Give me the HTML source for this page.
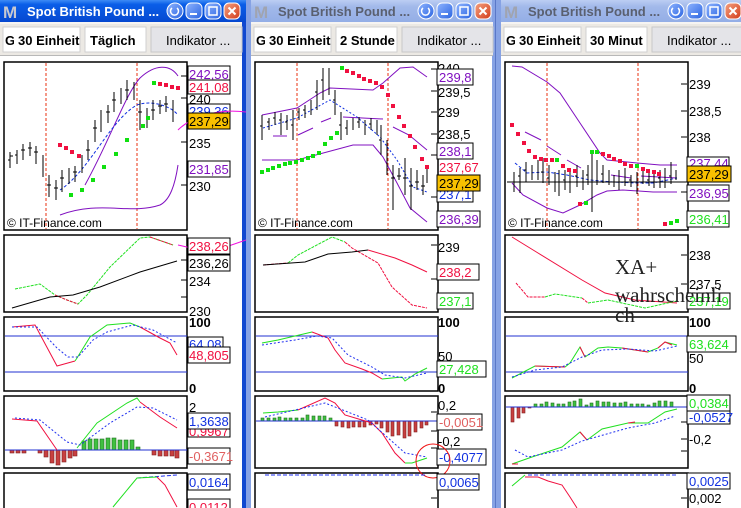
<!DOCTYPE html>
<html><head><meta charset="utf-8"><style>
html,body{margin:0;padding:0;width:741px;height:508px;overflow:hidden;background:#fff}
svg{display:block}
text{font-family:"Liberation Sans",sans-serif}
.t{font-size:13px;fill:#000}
.ttl{font-size:13px;font-weight:bold}
</style></head><body>
<svg width="741" height="508" viewBox="0 0 741 508" xmlns="http://www.w3.org/2000/svg">
<defs>
<linearGradient id="act" x1="0" y1="0" x2="0" y2="1"><stop offset="0" stop-color="#3d8bf5"/><stop offset="0.2" stop-color="#0a5ee8"/><stop offset="1" stop-color="#0648d0"/></linearGradient>
<linearGradient id="ina" x1="0" y1="0" x2="0" y2="1"><stop offset="0" stop-color="#bccdf3"/><stop offset="0.3" stop-color="#a2b9ea"/><stop offset="1" stop-color="#94aee6"/></linearGradient>
<linearGradient id="bb" x1="0" y1="0" x2="1" y2="1"><stop offset="0" stop-color="#8fb4ff"/><stop offset="1" stop-color="#2a64e0"/></linearGradient>
<linearGradient id="rb" x1="0" y1="0" x2="1" y2="1"><stop offset="0" stop-color="#f4a080"/><stop offset="1" stop-color="#d23c1a"/></linearGradient>
<g id="btns">
 <rect x="167" y="3" width="16" height="16" rx="8" fill="url(#bb)" stroke="#fff"/>
 <path d="M172,8 a4,4 0 1 0 5,0" fill="none" stroke="#fff" stroke-width="1.5"/>
 <rect x="186" y="3" width="16" height="16" rx="5" fill="url(#bb)" stroke="#fff"/>
 <rect x="190" y="13" width="7" height="2" fill="#fff"/>
 <rect x="205" y="3" width="16" height="16" rx="5" fill="url(#bb)" stroke="#fff"/>
 <rect x="209" y="7" width="8" height="8" fill="none" stroke="#fff" stroke-width="1.5"/>
 <rect x="224" y="3" width="16" height="16" rx="5" fill="url(#rb)" stroke="#fff"/>
 <path d="M228.5,7.5 l7,7 M235.5,7.5 l-7,7" stroke="#fff" stroke-width="2"/>
</g>
<g id="chrome">
 <rect x="0" y="22" width="242" height="34" fill="#ece9e4"/>
 <line x1="0" y1="23" x2="242" y2="23" stroke="#fff"/>
 <line x1="0" y1="55.5" x2="242" y2="55.5" stroke="#b8b8b8"/>
 <rect x="3" y="27" width="77" height="25" fill="#fff" stroke="#d0d0d0"/>
 <rect x="85" y="27" width="61" height="25" fill="#fff" stroke="#d0d0d0"/>
 <rect x="151" y="27" width="91" height="25" fill="#e4e4e8" stroke="#c8c8c8"/>
 <text x="5" y="45" class="t" style="font-weight:bold">G</text>
 <rect x="14" y="28" width="3" height="23" fill="#fff"/>
 <text x="18" y="45" class="t" style="font-weight:bold">30 Einheit</text>
 <text x="166" y="45" class="t">Indikator ...</text>
 <rect x="4" y="62" width="183" height="168" fill="none" stroke="#000" stroke-width="1.5"/>
 <rect x="4" y="235" width="183" height="77" fill="none" stroke="#000" stroke-width="1.5"/>
 <rect x="4" y="317" width="183" height="74" fill="none" stroke="#000" stroke-width="1.5"/>
 <rect x="4" y="396" width="183" height="72" fill="none" stroke="#000" stroke-width="1.5"/>
 <rect x="4" y="473" width="183" height="40" fill="none" stroke="#000" stroke-width="1.5"/>
 <path d="M46,63V229 M137,63V229" stroke="#e83010" stroke-dasharray="3,2"/>
 <text x="7" y="227" class="t" style="font-size:12px">© IT-Finance.com</text>
</g>
</defs>

<!-- window backgrounds / borders -->
<rect x="242" y="0" width="4" height="508" fill="#1048d0"/>
<rect x="246" y="0" width="5" height="508" fill="#86a2e4"/>
<rect x="492" y="0" width="9" height="508" fill="#86a2e4"/>
<rect x="495" y="0" width="1" height="508" fill="#5a78c8"/>

<!-- ===== Window 1 ===== -->
<g>
<rect x="0" y="0" width="246" height="22" fill="url(#act)"/>
<text x="3" y="18" style="font-size:17px;font-weight:bold;fill:#c8c8d0">M</text>
<text x="27" y="16" class="ttl" fill="#fff">Spot British Pound ...</text>
<use href="#btns"/>
<use href="#chrome"/>
<text x="90" y="45" class="t" style="font-weight:bold">Täglich</text>
<!-- main chart -->
<path d="M85,185 C110,140 125,95 140,78 C155,64 170,64 178,76" fill="none" stroke="#8010c0"/>
<path d="M60,215 C100,200 130,215 160,205 C170,200 175,185 178,165" fill="none" stroke="#8010c0"/>
<path d="M60,190 C90,170 110,120 137,105 C150,100 170,105 178,115" fill="none" stroke="#1030e0" stroke-dasharray="3,2"/>
<path d="M10,152v16M17,150v14M23,144v16M30,142v14M36,146v18M43,155v22M49,175v22M56,180v20M62,170v22M69,168v16M75,166v16M82,155v18M88,140v20M95,120v22M101,110v22M108,105v18M114,92v20M121,88v16M127,80v20M134,82v18M140,100v30M147,108v20M153,100v20M160,100v14M166,96v16M173,100v22" stroke="#000" fill="none"/>
<path d="M8,160h2M10,156h3M15,155h2M21,150h4M28,148h4M34,152h4M47,185h4M54,188h4M60,178h4M73,172h4M86,150h4M93,128h4M106,112h4M112,100h4M125,90h4M138,112h4M151,110h4M158,106h4M164,104h4" stroke="#000"/>
<g fill="#10e010"><rect x="69" y="193" width="4" height="4"/><rect x="80" y="188" width="4" height="4"/><rect x="91" y="178" width="4" height="4"/><rect x="102" y="165" width="4" height="4"/><rect x="114" y="152" width="4" height="4"/><rect x="125" y="138" width="4" height="4"/><rect x="141" y="124" width="4" height="4"/><rect x="146" y="116" width="4" height="4"/><rect x="152" y="81" width="4" height="4"/></g>
<g fill="#f01040"><rect x="58" y="143" width="4" height="4"/><rect x="64" y="146" width="4" height="4"/><rect x="70" y="150" width="4" height="4"/><rect x="77" y="154" width="4" height="4"/><rect x="158" y="82" width="4" height="4"/><rect x="164" y="83" width="4" height="4"/><rect x="170" y="85" width="4" height="4"/><rect x="176" y="86" width="4" height="4"/></g>
<rect x="188" y="66" width="42" height="16" fill="#fff" stroke="#000"/><text x="189" y="79" class="t" fill="#8010c0" style="fill:#8010c0">242,56</text>
<rect x="188" y="80" width="42" height="14" fill="#fff" stroke="#000"/><text x="189" y="92" class="t" style="fill:#f01040">241,08</text>
<text x="189" y="104" class="t">240</text>
<rect x="188" y="104" width="42" height="12" fill="#fff" stroke="#000"/><text x="189" y="116" class="t" style="fill:#1030e0">239,36</text>
<path d="M178,130 C190,118 215,108 246,112" fill="none" stroke="#f010e0"/>
<rect x="188" y="113" width="42" height="16" fill="#f8c000" stroke="#000"/><text x="189" y="126" class="t">237,29</text>
<text x="189" y="148" class="t">235</text>
<rect x="188" y="161" width="42" height="16" fill="#fff" stroke="#000"/><text x="189" y="174" class="t" style="fill:#8010c0">231,85</text>
<text x="189" y="191" class="t">230</text>
<path d="M181,76h6M181,98h6M181,142h6M181,185h6" stroke="#000"/>
<!-- panel 2 -->
<path d="M15,289 40,284 55,295 67,300 78,304 87,295 110,267 140,238 150,237 173,245" fill="none" stroke="#20e020" stroke-dasharray="3,1"/>
<path d="M55,295 67,300 78,304 M150,237 173,245" fill="none" stroke="#f01040" stroke-dasharray="3,1"/>
<path d="M12,308 50,297 73,295 100,287 140,272 177,261" fill="none" stroke="#000"/>
<path d="M178,245 200,250 217,250 246,240" fill="none" stroke="#f010e0"/>
<rect x="188" y="238" width="42" height="16" fill="#fff" stroke="#000"/><text x="189" y="251" class="t" style="fill:#f01040">238,26</text>
<rect x="188" y="255" width="42" height="16" fill="#fff" stroke="#000"/><text x="189" y="268" class="t">236,26</text>
<text x="189" y="286" class="t">234</text>
<text x="189" y="316" class="t">230</text>
<path d="M181,260h6M181,280h6M181,297h6" stroke="#000"/>
<!-- panel 3 -->
<path d="M5,336H187M5,372H187" stroke="#2030d0"/>
<path d="M12,327 35,325 57,366 75,361 M140,327 160,338 170,343 177,355" fill="none" stroke="#f01040"/>
<path d="M75,361 77,358 90,337 107,325 130,323 140,327" fill="none" stroke="#20e020"/>
<path d="M12,327 37,327 57,348 68,357 78,357 93,340 107,332 133,325 153,330 177,343" fill="none" stroke="#2030f0" stroke-dasharray="2,2"/>
<text x="189" y="327" class="t" style="font-weight:bold">100</text>
<rect x="188" y="337" width="35" height="13" fill="#fff" stroke="#000"/><text x="189" y="349" class="t" style="fill:#1030e0">64,08</text>
<rect x="188" y="347" width="42" height="16" fill="#fff" stroke="#000"/><text x="189" y="360" class="t" style="fill:#f01040">48,805</text>
<text x="189" y="393" class="t" style="font-weight:bold">0</text>
<!-- panel 4 -->
<g fill="#40c040" stroke="#207020" stroke-width="0.6"><rect x="82" y="441" width="4" height="9"/><rect x="88" y="439" width="4" height="11"/><rect x="94" y="439" width="4" height="11"/><rect x="100" y="439" width="4" height="11"/><rect x="106" y="438" width="4" height="12"/><rect x="112" y="438" width="4" height="12"/><rect x="118" y="440" width="4" height="10"/><rect x="124" y="440" width="4" height="10"/><rect x="130" y="440" width="4" height="10"/><rect x="136" y="447" width="4" height="3"/></g>
<g fill="#c84040" stroke="#802020" stroke-width="0.6"><rect x="10" y="450" width="4" height="3"/><rect x="16" y="450" width="4" height="3"/><rect x="22" y="450" width="4" height="3"/><rect x="38" y="450" width="4" height="3"/><rect x="44" y="450" width="4" height="7"/><rect x="50" y="450" width="4" height="13"/><rect x="56" y="450" width="4" height="15"/><rect x="62" y="450" width="4" height="12"/><rect x="68" y="450" width="4" height="8"/><rect x="73" y="450" width="4" height="6"/><rect x="152" y="450" width="4" height="5"/><rect x="158" y="450" width="4" height="6"/><rect x="164" y="450" width="4" height="6"/><rect x="170" y="450" width="4" height="6"/><rect x="175" y="450" width="4" height="8"/></g>
<path d="M5,450H187" stroke="#2030d0"/>
<path d="M12,419 37,421 57,450 M140,402 160,417 177,428" fill="none" stroke="#f01040"/>
<path d="M77,448 97,423 127,403 137,398 140,402" fill="none" stroke="#20e020"/>
<path d="M15,418 40,420 67,442 80,445 110,423 137,407 153,408 177,420" fill="none" stroke="#2030f0" stroke-dasharray="2,2"/>
<text x="189" y="412" class="t">2</text>
<rect x="188" y="427" width="42" height="10" fill="#fff" stroke="#000"/><text x="189" y="436" class="t" style="fill:#f01040">0,9967</text>
<rect x="188" y="413" width="42" height="16" fill="#fff" stroke="#000"/><text x="189" y="426" class="t" style="fill:#1030e0">1,3638</text>
<rect x="188" y="448" width="42" height="16" fill="#fff" stroke="#000"/><text x="189" y="461" class="t" style="fill:#e06060">-0,3671</text>
<!-- panel 5 -->
<path d="M137,478 177,475" stroke="#2030f0" stroke-dasharray="4,2"/>
<path d="M113,507 137,478 157,477" fill="none" stroke="#20e020"/>
<path d="M157,477 165,485 177,507" fill="none" stroke="#f01040"/>
<rect x="188" y="474" width="42" height="16" fill="#fff" stroke="#000"/><text x="189" y="487" class="t" style="fill:#1030e0">0,0164</text>
<rect x="188" y="499" width="42" height="16" fill="#fff" stroke="#000"/><text x="189" y="512" class="t" style="fill:#f01040">0,0112</text>
</g>

<!-- ===== Window 2 ===== -->
<g transform="translate(251,0)">
<rect x="0" y="0" width="241" height="22" fill="url(#ina)"/>
<text x="3" y="18" style="font-size:17px;font-weight:bold;fill:#a0a4b0">M</text>
<text x="27" y="16" class="ttl" fill="#5a6070">Spot British Pound ...</text>
<use href="#btns"/>
<use href="#chrome"/>
<text x="89" y="45" class="t" style="font-weight:bold">2 Stunde</text>
<path d="M11,115 46,108 69,93 79,88 122,90 132,83 149,68 162,67 176,77" fill="none" stroke="#8010c0"/>
<path d="M11,160 46,160 76,152 102,145 122,145 132,157 146,183 159,208 176,222" fill="none" stroke="#8010c0"/>
<path d="M22,136H36M47,135 62,128M70,122 80,118M92,117 132,119M142,127 158,135 176,150" fill="none" stroke="#8010c0"/>
<path d="M12,128 46,118 79,100 106,117 129,137 146,160 162,187 176,192" fill="none" stroke="#1030e0" stroke-dasharray="2,2"/>
<path d="M11,115v25M18,118v12M24,112v13M30,113v22M36,115v15M42,110v30M48,108v12M54,105v13M60,100v15M66,80v30M72,68v32M78,68v27M84,90v25M90,112v28M96,120v15M102,118v12M108,117v11M114,120v15M120,118v12M126,120v15M130,125v30M136,140v35M142,165v45M148,168v12M154,158v37M160,168v42M166,170v20M172,175v20M176,168v15" stroke="#000" fill="none"/>
<path d="M9,126h2M16,122h2M22,118h2M28,120h2M34,122h2M40,125h2M46,112h2M52,110h2M64,92h2M70,80h2M82,100h2M88,125h2M94,128h2M106,122h2M118,124h2M128,140h2M140,178h4M146,176h4M152,178h4M158,186h4M164,182h4M170,186h4" stroke="#000"/>
<g fill="#10e010"><rect x="9" y="170" width="4" height="4"/><rect x="15" y="168" width="4" height="4"/><rect x="20" y="166" width="4" height="4"/><rect x="26" y="164" width="4" height="4"/><rect x="32" y="162" width="4" height="4"/><rect x="37" y="161" width="4" height="4"/><rect x="43" y="160" width="4" height="4"/><rect x="49" y="158" width="4" height="4"/><rect x="55" y="156" width="4" height="4"/><rect x="60" y="154" width="4" height="4"/><rect x="66" y="151" width="4" height="4"/><rect x="72" y="142" width="4" height="4"/><rect x="78" y="136" width="4" height="4"/><rect x="84" y="131" width="4" height="4"/><rect x="89" y="66" width="4" height="4"/></g>
<g fill="#f01040"><rect x="94" y="69" width="4" height="4"/><rect x="100" y="71" width="4" height="4"/><rect x="106" y="74" width="4" height="4"/><rect x="111" y="77" width="4" height="4"/><rect x="117" y="79" width="4" height="4"/><rect x="123" y="81" width="4" height="4"/><rect x="129" y="85" width="4" height="4"/><rect x="135" y="93" width="4" height="4"/><rect x="140" y="104" width="4" height="4"/><rect x="146" y="115" width="4" height="4"/><rect x="151" y="124" width="4" height="4"/><rect x="157" y="134" width="4" height="4"/><rect x="162" y="145" width="4" height="4"/><rect x="169" y="157" width="4" height="4"/><rect x="174" y="165" width="4" height="4"/></g>
<text x="187" y="73" class="t">240</text>
<rect x="186" y="69" width="36" height="16" fill="#fff" stroke="#000"/><text x="188" y="82" class="t" style="fill:#8010c0">239,8</text>
<text x="187" y="97" class="t">239,5</text>
<text x="187" y="117" class="t">239</text>
<text x="187" y="139" class="t">238,5</text>
<rect x="186" y="143" width="36" height="16" fill="#fff" stroke="#000"/><text x="188" y="156" class="t" style="fill:#8010c0">238,1</text>
<text x="188" y="172" class="t" style="fill:#f01040">237,67</text>
<rect x="186" y="188" width="36" height="14" fill="#fff" stroke="#000"/><text x="188" y="199" class="t" style="fill:#1030e0">237,1</text>
<rect x="186" y="175" width="43" height="16" fill="#f8c000" stroke="#000"/><text x="188" y="188" class="t">237,29</text>
<rect x="186" y="211" width="43" height="16" fill="#fff" stroke="#000"/><text x="188" y="224" class="t" style="fill:#8010c0">236,39</text>
<path d="M180,69h6M180,91h6M180,112h6M180,134h6M180,155h6M180,197h6" stroke="#000"/>
<!-- panel 2 -->
<path d="M12,265 37,263 M94,242 101,248 127,263 141,287 161,305 176,308" fill="none" stroke="#f01040" stroke-dasharray="3,1"/>
<path d="M37,263 47,255 81,237 94,242" fill="none" stroke="#20e020" stroke-dasharray="3,1"/>
<path d="M12,265 54,262 77,254 101,252 117,250" fill="none" stroke="#000"/>
<path d="M117,250 144,258 161,265 176,272" fill="none" stroke="#f01040"/>
<text x="187" y="252" class="t">239</text>
<rect x="186" y="264" width="42" height="16" fill="#fff" stroke="#000"/><text x="188" y="277" class="t" style="fill:#f01040">238,2</text>
<rect x="186" y="293" width="36" height="16" fill="#fff" stroke="#000"/><text x="188" y="306" class="t" style="fill:#20e020">237,1</text>
<path d="M180,245h6M180,279h6" stroke="#000"/>
<!-- panel 3 -->
<path d="M5,336H187M5,372H187" stroke="#2030d0"/>
<path d="M11,343 27,340 61,332" fill="none" stroke="#20e020"/>
<path d="M61,332 77,338 84,350 94,363 111,369 121,373 131,379" fill="none" stroke="#f01040"/>
<path d="M131,379 141,378 151,377 154,381 164,374 176,368" fill="none" stroke="#20e020"/>
<path d="M11,345 44,340 66,336 81,338 97,355 121,367 134,375 154,378 176,373" fill="none" stroke="#2030f0" stroke-dasharray="2,2"/>
<text x="187" y="327" class="t" style="font-weight:bold">100</text>
<text x="187" y="361" class="t">50</text>
<rect x="186" y="361" width="49" height="16" fill="#fff" stroke="#000"/><text x="188" y="374" class="t" style="fill:#20e020">27,428</text>
<text x="187" y="393" class="t" style="font-weight:bold">0</text>
<!-- panel 4 -->
<g fill="#40c040" stroke="#207020" stroke-width="0.6"><rect x="10" y="418" width="3" height="3"/><rect x="16" y="418" width="3" height="3"/><rect x="22" y="418" width="3" height="3"/><rect x="27" y="417" width="3" height="4"/><rect x="33" y="418" width="3" height="3"/><rect x="38" y="418" width="3" height="3"/><rect x="44" y="418" width="3" height="3"/><rect x="50" y="418" width="3" height="3"/><rect x="55" y="415" width="3" height="6"/><rect x="61" y="416" width="3" height="5"/><rect x="67" y="416" width="3" height="5"/><rect x="72" y="416" width="3" height="5"/><rect x="78" y="418" width="3" height="3"/></g>
<g fill="#c84040" stroke="#802020" stroke-width="0.6"><rect x="84" y="421" width="3" height="5"/><rect x="90" y="421" width="3" height="6"/><rect x="96" y="421" width="3" height="7"/><rect x="101" y="421" width="3" height="6"/><rect x="107" y="421" width="3" height="6"/><rect x="112" y="421" width="3" height="6"/><rect x="118" y="421" width="3" height="4"/><rect x="124" y="421" width="3" height="3"/><rect x="129" y="421" width="3" height="7"/><rect x="135" y="421" width="3" height="11"/><rect x="140" y="421" width="3" height="15"/><rect x="146" y="421" width="3" height="14"/><rect x="152" y="421" width="3" height="17"/><rect x="157" y="421" width="3" height="15"/><rect x="163" y="421" width="3" height="11"/><rect x="169" y="421" width="3" height="7"/><rect x="174" y="421" width="3" height="4"/></g>
<path d="M5,421H187" stroke="#2030d0"/>
<path d="M12,413 27,412 47,410" fill="none" stroke="#20e020"/>
<path d="M47,410 74,398 84,403 94,415 121,423 131,433 144,453 154,463" fill="none" stroke="#f01040"/>
<path d="M154,463 161,463 176,458" fill="none" stroke="#20e020"/>
<path d="M14,417 74,403 117,420 154,453 176,457" fill="none" stroke="#2030f0" stroke-dasharray="2,2"/>
<text x="187" y="410" class="t">0,2</text>
<rect x="186" y="414" width="45" height="16" fill="#fff" stroke="#000"/><text x="188" y="427" class="t" style="fill:#e06060">-0,0051</text>
<text x="187" y="446" class="t">-0,2</text>
<rect x="186" y="449" width="49" height="16" fill="#fff" stroke="#000"/><text x="188" y="462" class="t" style="fill:#1030e0">-0,4077</text>
<circle cx="182" cy="461" r="17" fill="none" stroke="#f01010"/>
<path d="M180,412h6M180,431h6M180,448h6" stroke="#000"/>
<!-- panel 5 -->
<path d="M14,475H176" stroke="#2030f0" stroke-dasharray="4,2"/>
<rect x="186" y="474" width="42" height="16" fill="#fff" stroke="#000"/><text x="188" y="487" class="t" style="fill:#1030e0">0,0065</text>
<path d="M180,498h6" stroke="#000"/>
</g>

<!-- ===== Window 3 ===== -->
<g transform="translate(501,0)">
<rect x="0" y="0" width="241" height="22" fill="url(#ina)"/>
<text x="3" y="18" style="font-size:17px;font-weight:bold;fill:#a0a4b0">M</text>
<text x="27" y="16" class="ttl" fill="#5a6070">Spot British Pound ...</text>
<use href="#btns"/>
<use href="#chrome"/>
<text x="89" y="45" class="t" style="font-weight:bold">30 Minut</text>
<path d="M11,66 21,67 46,82 59,93 79,123 99,153 106,160 136,163 159,165 176,165" fill="none" stroke="#8010c0"/>
<path d="M11,183 22,195 46,208 62,213 79,205 96,195 106,191 122,190 152,192 176,192" fill="none" stroke="#8010c0"/>
<path d="M24,132 40,140M46,146 60,155M66,160 80,168M110,175 130,178M140,176 176,178" fill="none" stroke="#8010c0"/>
<path d="M14,163 26,173 46,172 66,175 89,180 112,182 136,183 152,183 176,178" fill="none" stroke="#1030e0" stroke-dasharray="3,2"/>
<path d="M6,182H187" stroke="#000"/>
<path d="M13,172v20M19,168v25M25,162v20M31,165v15M37,160v20M42,158v25M48,165v20M54,172v20M58,170v26M64,170v20M69,168v25M76,165v22M82,170v20M87,165v20M91,150v62M96,160v25M102,165v18M108,170v15M113,175v12M118,170v20M124,168v18M130,175v12M136,172v22M142,168v16M148,172v14M153,172v16M159,170v18M164,168v20M170,162v22M175,170v10" stroke="#000" fill="none"/>
<path d="M11,182h2M17,176h2M23,170h2M40,172h2M46,178h2M62,180h2M74,176h2M85,175h2M100,174h2M116,182h2M128,180h2M146,180h2M157,178h2M168,176h2" stroke="#000"/>
<g fill="#f01040"><rect x="9" y="123" width="4" height="4"/><rect x="15" y="132" width="4" height="4"/><rect x="21" y="141" width="4" height="4"/><rect x="26" y="149" width="4" height="4"/><rect x="32" y="155" width="4" height="4"/><rect x="38" y="157" width="4" height="4"/><rect x="43" y="158" width="4" height="4"/><rect x="49" y="158" width="4" height="4"/><rect x="60" y="164" width="4" height="4"/><rect x="66" y="168" width="4" height="4"/><rect x="72" y="169" width="4" height="4"/><rect x="100" y="152" width="4" height="4"/><rect x="106" y="154" width="4" height="4"/><rect x="111" y="157" width="4" height="4"/><rect x="117" y="159" width="4" height="4"/><rect x="122" y="162" width="4" height="4"/><rect x="128" y="164" width="4" height="4"/><rect x="140" y="167" width="4" height="4"/><rect x="145" y="169" width="4" height="4"/><rect x="151" y="170" width="4" height="4"/><rect x="156" y="172" width="4" height="4"/><rect x="77" y="202" width="4" height="4"/><rect x="162" y="222" width="4" height="4"/></g>
<g fill="#10e010"><rect x="54" y="158" width="4" height="4"/><rect x="89" y="150" width="4" height="4"/><rect x="94" y="150" width="4" height="4"/><rect x="134" y="164" width="4" height="4"/><rect x="83" y="201" width="4" height="4"/><rect x="168" y="221" width="4" height="4"/><rect x="174" y="219" width="4" height="4"/></g>
<text x="188" y="89" class="t">239</text>
<text x="188" y="116" class="t">238,5</text>
<text x="188" y="142" class="t">238</text>
<rect x="186" y="157" width="42" height="12" fill="#fff" stroke="#000"/><text x="188" y="168" class="t" style="fill:#8010c0">237,44</text>
<rect x="186" y="185" width="42" height="16" fill="#fff" stroke="#000"/><text x="188" y="198" class="t" style="fill:#8010c0">236,95</text>
<rect x="186" y="166" width="44" height="16" fill="#f8c000" stroke="#000"/><text x="188" y="179" class="t">237,29</text>
<rect x="186" y="211" width="42" height="16" fill="#fff" stroke="#000"/><text x="188" y="224" class="t" style="fill:#20e020">236,41</text>
<path d="M180,84h6M180,111h6M180,137h6M180,192h6" stroke="#000"/>
<!-- panel 2 -->
<path d="M11,237 37,253 81,280 104,293 134,300 176,303" fill="none" stroke="#f01040"/>
<path d="M15,283 27,297 44,297 M81,298 87,303" fill="none" stroke="#f01040" stroke-dasharray="3,1"/>
<path d="M44,297 54,294 81,298 M87,303 107,300 144,308 176,301" fill="none" stroke="#20e020" stroke-dasharray="3,1"/>
<text x="188" y="260" class="t">238</text>
<text x="188" y="289" class="t">237,5</text>
<rect x="186" y="293" width="43" height="16" fill="#fff" stroke="#000"/><text x="188" y="306" class="t" style="fill:#20e020">237,19</text>
<path d="M180,255h6M180,284h6" stroke="#000"/>
<text x="114" y="274" style="font-family:'Liberation Serif',serif;font-size:21px;fill:#222">XA+</text>
<text x="114" y="302" style="font-family:'Liberation Serif',serif;font-size:21px;fill:#222">wahrscheinli</text>
<text x="114" y="322" style="font-family:'Liberation Serif',serif;font-size:21px;fill:#222">ch</text>
<!-- panel 3 -->
<path d="M5,336H187M5,372H187" stroke="#2030d0"/>
<path d="M11,378 34,366 64,367 69,363 79,347 84,357 97,348 107,347 121,348 134,350 147,352 157,348 164,342 176,345" fill="none" stroke="#20e020"/>
<path d="M34,366 64,367 M79,347 84,357 M121,348 147,352 M157,348 164,342 171,345" fill="none" stroke="#f01040"/>
<path d="M11,377 34,370 61,367 81,357 101,350 127,349 154,351 176,346" fill="none" stroke="#2030f0" stroke-dasharray="2,2"/>
<text x="188" y="327" class="t" style="font-weight:bold">100</text>
<text x="188" y="363" class="t">50</text>
<rect x="186" y="336" width="49" height="16" fill="#fff" stroke="#000"/><text x="188" y="349" class="t" style="fill:#20e020">63,624</text>
<text x="188" y="393" class="t" style="font-weight:bold">0</text>
<!-- panel 4 -->
<g fill="#c84040" stroke="#802020" stroke-width="0.6"><rect x="10" y="407" width="3" height="15"/><rect x="16" y="407" width="3" height="11"/><rect x="21" y="407" width="3" height="6"/><rect x="27" y="407" width="3" height="1"/></g>
<g fill="#40c040" stroke="#207020" stroke-width="0.6"><rect x="33" y="404" width="3" height="3"/><rect x="39" y="404" width="3" height="3"/><rect x="44" y="402" width="3" height="5"/><rect x="50" y="403" width="3" height="4"/><rect x="56" y="404" width="3" height="3"/><rect x="61" y="404" width="3" height="3"/><rect x="67" y="402" width="3" height="5"/><rect x="72" y="401" width="3" height="6"/><rect x="78" y="399" width="3" height="8"/><rect x="84" y="405" width="3" height="2"/><rect x="89" y="403" width="3" height="4"/><rect x="95" y="401" width="3" height="6"/><rect x="101" y="402" width="3" height="5"/><rect x="106" y="402" width="3" height="5"/><rect x="112" y="403" width="3" height="4"/><rect x="118" y="403" width="3" height="4"/><rect x="123" y="402" width="3" height="5"/><rect x="129" y="404" width="3" height="3"/><rect x="135" y="404" width="3" height="3"/><rect x="140" y="404" width="3" height="3"/><rect x="146" y="405" width="3" height="2"/><rect x="152" y="403" width="3" height="4"/><rect x="157" y="401" width="3" height="6"/><rect x="163" y="401" width="3" height="6"/><rect x="169" y="402" width="3" height="5"/></g>
<path d="M5,407H187" stroke="#2030d0"/>
<path d="M11,464 31,457 61,447 79,432 86,440 101,429 127,423 147,423 164,412 176,409" fill="none" stroke="#20e020"/>
<path d="M11,464 17,464 M79,432 86,440 M127,423 134,422" fill="none" stroke="#f01040"/>
<path d="M14,450 27,457 61,450 81,441 127,428 154,423 174,416" fill="none" stroke="#2030f0" stroke-dasharray="2,2"/>
<rect x="186" y="411" width="43" height="13" fill="#fff" stroke="#000"/><text x="188" y="422" class="t" style="fill:#1030e0">-0,0527</text>
<rect x="186" y="395" width="43" height="16" fill="#fff" stroke="#000"/><text x="188" y="408" class="t" style="fill:#20e020">0,0384</text>
<text x="188" y="444" class="t">-0,2</text>
<path d="M180,422h6M180,439h6M180,451h6" stroke="#000"/>
<!-- panel 5 -->
<path d="M27,475H176" stroke="#2030f0" stroke-dasharray="4,2"/>
<path d="M11,486 24,475" fill="none" stroke="#20e020"/>
<path d="M24,477 37,477 47,481 61,485 69,497 76,508" fill="none" stroke="#f01040"/>
<rect x="186" y="473" width="43" height="16" fill="#fff" stroke="#000"/><text x="188" y="486" class="t" style="fill:#1030e0">0,0025</text>
<text x="188" y="503" class="t">0,002</text>
<path d="M180,498h6" stroke="#000"/>
</g>
</svg>
</body></html>
